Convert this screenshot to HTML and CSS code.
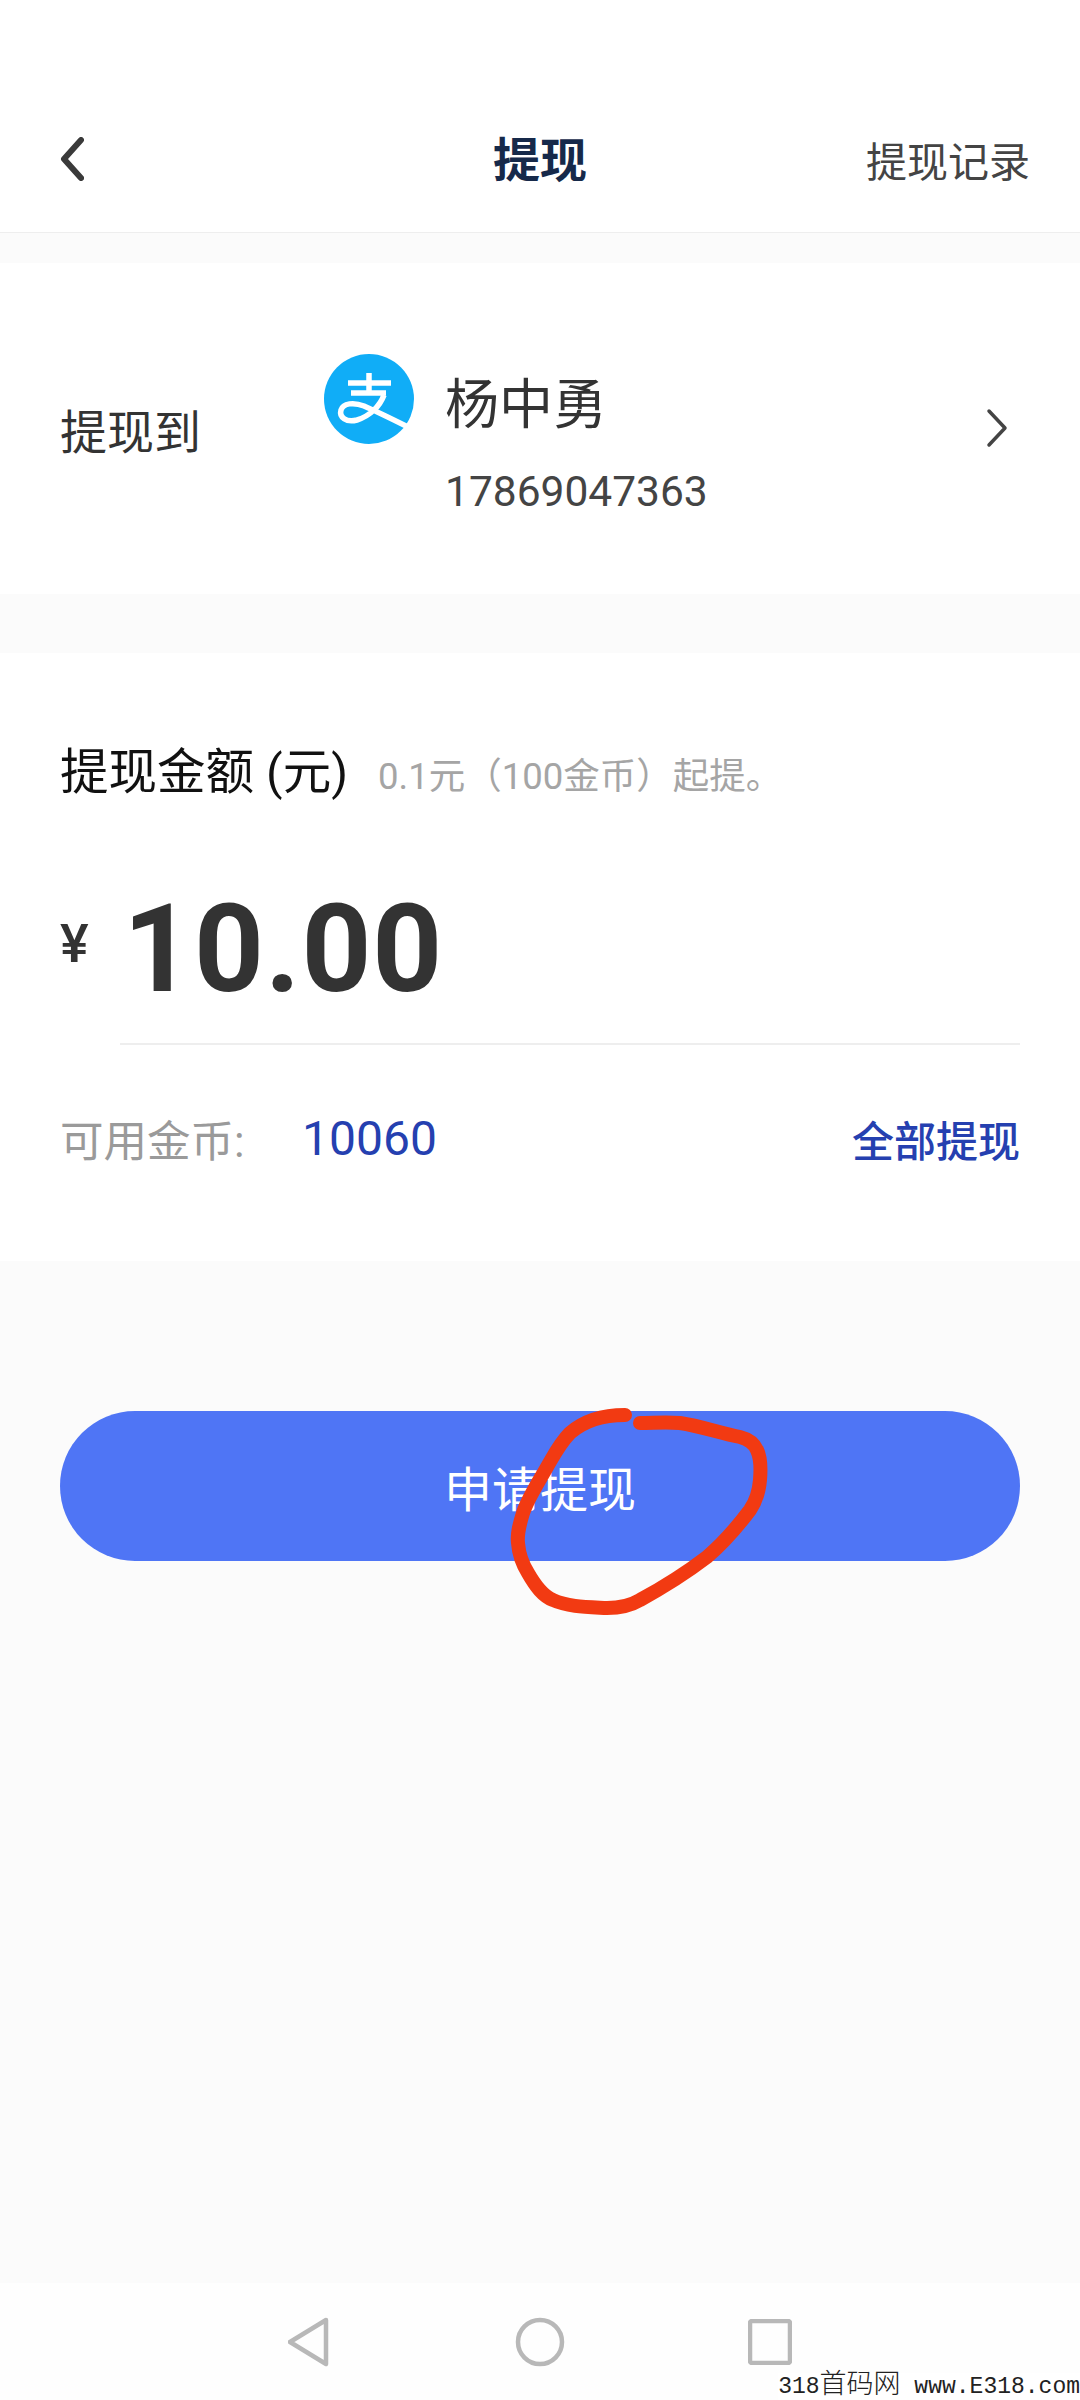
FILE: index.html
```html
<!DOCTYPE html>
<html lang="zh-CN">
<head>
    <meta charset="UTF-8">
    <meta name="viewport" content="width=device-width, initial-scale=1.0">
    <title>提现</title>
    <link rel="stylesheet" href="styles.css">
</head>
<body>
    <div class="page">
        <header class="top-bar">
            <svg class="back-icon" width="24" height="44" viewBox="0 0 24 44">
                <path d="M21 3 L4 22 L21 41" />
            </svg>
            <h1>提现</h1>
            <span class="record-link">提现记录</span>
        </header>

        <section class="card account-card">
            <span class="account-label">提现到</span>
            <div class="account-info">
                <div class="account-name">
                    <!-- alipay mark -->
                    <svg class="alipay-logo" width="90" height="90" viewBox="0 0 90 90">
                        <circle cx="45" cy="45" r="45" fill="#10adf7" />
                        <g fill="none" stroke="#fff" stroke-width="5.5">
                            <path d="M24 29 H67" />
                            <path d="M45 19 V38" />
                            <path d="M27 39 H62" />
                            <path d="M60 41 C56 52 46 62 33 66 C22 69 15 63 17 56 C19 49 30 48 40 52 C54 58 70 66 86 74" />
                        </g>
                    </svg>
                    <span>杨中勇</span>
                </div>
                <div class="account-phone">17869047363</div>
            </div>
            <svg class="next-icon" width="22" height="40" viewBox="0 0 22 40">
                <path d="M3 3 L19 20 L3 37" />
            </svg>
        </section>

        <section class="card amount-card">
            <div class="amount-title">
                <h2>提现金额 (元)</h2>
                <span class="amount-tip">0.1元（100金币）起提。</span>
            </div>
            <div class="amount-row">
                <span class="yen">¥</span>
                <span class="amount-value">10.00</span>
            </div>
            <div class="amount-line"></div>
            <div class="balance-row">
                <span class="balance-label">可用金币:</span>
                <span class="balance-value">10060</span>
                <span class="balance-all">全部提现</span>
            </div>
        </section>

        <main class="action-area">
            <div class="apply-wrap">
                <button class="apply-btn">申请提现</button>
                <!-- hand drawn ring over the button -->
                <svg class="ring" width="250" height="210" viewBox="0 0 250 210">
                    <path d="M109 9 C92 9 70 13 54 27 C44 37 38 49 31 61 C22 77 12 92 7 107 C3 120 1 128 2 137 C3 150 7 159 12 167 C20 181 27 190 37 194 C52 201 72 201 91 202 C104 202 114 200 124 194 C146 182 170 167 191 151 C206 138 222 120 234 104 C240 95 243 86 244 74 C245 62 245 52 241 44 C238 37 232 33 224 31 C204 27 184 20 164 17 C150 16 137 17 124 17" />
                </svg>
            </div>
        </main>

        <nav class="nav-bar">
            <svg width="44" height="52" viewBox="0 0 44 52">
                <path d="M38 4 L2 26 L38 48 Z" />
            </svg>
            <svg width="50" height="50" viewBox="0 0 50 50">
                <circle cx="25" cy="25" r="22" />
            </svg>
            <svg width="44" height="46" viewBox="0 0 44 46">
                <rect x="2" y="2" width="40" height="42" rx="2" />
            </svg>
        </nav>
        <div class="watermark">318<span class="watermark-cn">首码网</span> www.E318.com</div>
    </div>
</body>
</html>
```

FILE: styles.css
```css
* {
    margin: 0;
    padding: 0;
    box-sizing: border-box;
}

body {
    font-family: Roboto, "Noto Sans CJK SC", sans-serif;
    background: #fbfbfb;
    color: #333;
}

.page {
    position: relative;
    display: flex;
    flex-direction: column;
    width: 1080px;
    height: 2400px;
    overflow: hidden;
}

.top-bar {
    position: relative;
    display: flex;
    align-items: center;
    justify-content: space-between;
    height: 233px;
    padding: 86px 50px 0 60px;
    background: #fff;
    border-bottom: 1px solid #eeeeee;
}

.top-bar h1 {
    position: absolute;
    left: 0;
    right: 0;
    bottom: 37px;
    text-align: center;
    font-size: 47px;
    line-height: 68px;
    font-weight: 700;
    color: #16294a;
}

.back-icon path {
    fill: none;
    stroke: #3a3a3a;
    stroke-width: 6;
    stroke-linecap: round;
    stroke-linejoin: round;
}

.record-link {
    font-size: 41px;
    color: #444;
}

.card {
    background: #fff;
}

.account-card {
    display: flex;
    align-items: center;
    height: 331px;
    margin-top: 30px;
    padding: 0 72px 0 60px;
}

.account-label {
    width: 264px;
    font-size: 47px;
    color: #333;
}

.account-info {
    flex: 1;
    margin-top: 18px;
}

.account-name {
    display: flex;
    align-items: center;
    gap: 31px;
    font-size: 54px;
    color: #333;
}

.account-name span {
    margin-top: 3px;
}

.account-phone {
    margin: 18px 0 0 121px;
    font-size: 42.5px;
    line-height: 60px;
    color: #444;
}

.next-icon {
    margin-top: -2px;
}

.next-icon path {
    fill: none;
    stroke: #444;
    stroke-width: 3.5;
    stroke-linecap: round;
    stroke-linejoin: round;
}

.amount-card {
    height: 608px;
    margin-top: 59px;
    padding: 86px 60px 0;
}

.amount-title {
    display: flex;
    align-items: center;
    gap: 30px;
}

.amount-title h2 {
    font-size: 48.5px;
    font-weight: 400;
    color: #111;
    line-height: 68px;
}

.amount-tip {
    font-size: 36.5px;
    color: #a5a5a5;
}

.amount-row {
    display: flex;
    align-items: center;
    margin-top: 72px;
    height: 140px;
}

.yen {
    width: 63px;
    margin-top: -12px;
    font-size: 54px;
    font-weight: 500;
    color: #333;
}

.amount-value {
    font-size: 122px;
    font-weight: 700;
    letter-spacing: 1px;
    color: #333;
}

.amount-line {
    height: 2px;
    margin: 24px 0 0 60px;
    background: #eeeeee;
}

.balance-row {
    display: flex;
    align-items: center;
    margin-top: 62px;
    font-size: 43.5px;
}

.balance-label {
    width: 242px;
    color: #9a9a9a;
}

.balance-value {
    flex: 1;
    font-size: 48px;
    color: #2540b0;
}

.balance-all {
    font-size: 42px;
    font-weight: 500;
    color: #2540b0;
}

.action-area {
    flex: 1;
    padding: 150px 60px 0;
}

.apply-wrap {
    position: relative;
}

.apply-btn {
    display: block;
    width: 100%;
    height: 150px;
    border: none;
    border-radius: 75px;
    background: #4f75f5;
    color: #fff;
    font-family: inherit;
    font-size: 48px;
}

.ring {
    position: absolute;
    left: 456px;
    top: -5px;
    overflow: visible;
}

.ring path {
    fill: none;
    stroke: #f23a12;
    stroke-width: 14;
    stroke-linecap: round;
    stroke-linejoin: round;
}

.nav-bar {
    display: flex;
    align-items: center;
    justify-content: center;
    gap: 183px;
    height: 117px;
    background: #fefefe;
}

.nav-bar svg * {
    fill: none;
    stroke: #b8b8b8;
    stroke-width: 4.5;
    stroke-linejoin: round;
}

.watermark {
    position: absolute;
    right: 0;
    bottom: 0;
    font-family: "Liberation Mono", "Noto Sans CJK SC", monospace;
    font-size: 23px;
    line-height: 26px;
    color: #222;
    background: #fff;
}

.watermark-cn {
    font-size: 27px;
    font-weight: 300;
}
```
